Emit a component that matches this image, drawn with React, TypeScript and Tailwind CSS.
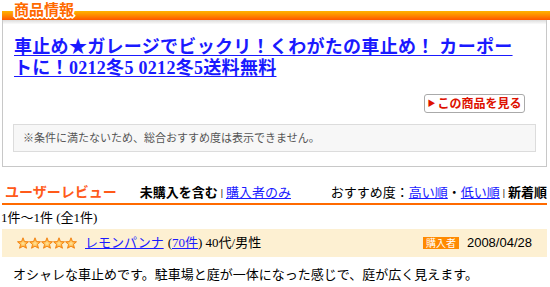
import React from "react";

const serif = "font-['Liberation_Serif','Noto_Sans_CJK_JP',serif]";
const sans = "font-['Liberation_Sans','Noto_Sans_CJK_JP',sans-serif]";

function Star() {
  return (
    <svg width="12" height="12" viewBox="0 0 24 23">
      <defs>
        <radialGradient id="sg" cx="50%" cy="55%" r="55%">
          <stop offset="0%" stopColor="#ffe9a0" />
          <stop offset="55%" stopColor="#ffb040" />
          <stop offset="100%" stopColor="#ff8a00" />
        </radialGradient>
      </defs>
      <polygon
        points="12,1 15,8.5 23,9 17,14.5 19,22 12,18 5,22 7,14.5 1,9 9,8.5"
        fill="url(#sg)"
        stroke="#f07800"
        strokeWidth="1.6"
        strokeLinejoin="round"
      />
    </svg>
  );
}

export default function App() {
  return (
    <div className={`w-[550px] h-[287px] bg-white overflow-hidden ${serif}`}>
      {/* header bar */}
      <div className="relative h-[20px]">
        <div className="absolute left-[2px] right-0 top-[11px] h-[9px] bg-gradient-to-b from-[#ffb400] to-[#ff5500]" />
        <span
          className={`absolute left-[14px] top-[1px] text-[15px] leading-[17px] font-bold text-[#ff6a00] ${sans} [text-shadow:1px_0_0_#fff,-1px_0_0_#fff,0_1px_0_#fff,0_-1px_0_#fff,1px_1px_0_#fff,-1px_-1px_0_#fff,1px_-1px_0_#fff,-1px_1px_0_#fff,2px_0_0_#fff,-2px_0_0_#fff,0_2px_0_#fff]`}
        >
          商品情報
        </span>
      </div>

      {/* product box */}
      <div className="ml-[2px] mr-[3px] h-[147px] border-x border-b border-[#c8c8c8] bg-gradient-to-b from-[#dcdcdc] via-white to-white bg-[length:100%_9px] bg-no-repeat flex flex-col">
        <a
          href="#"
          className="mt-[17px] ml-[11px] mr-[28px] text-[18px] leading-[21px] font-bold tracking-[0.3px] text-[#1a1aff] underline decoration-1 underline-offset-[2px]"
        >
          車止め★ガレージでビックリ！くわがたの車止め！ カーポートに！0212冬5 0212冬5送料無料
        </a>
        <div className="flex justify-end mt-[15px] mr-[21px]">
          <div
            className={`h-[19px] w-[101px] whitespace-nowrap flex items-center justify-center gap-[2px] border border-[#aaa] rounded-[3px] bg-white text-[#dd1100] text-[12px] font-bold ${sans}`}
          >
            <span className="text-[8px] leading-none">▶</span>
            <span className="leading-none">この商品を見る</span>
          </div>
        </div>
        <div className="mt-[11px] mx-[10px] h-[28px] flex items-center pl-[9px] bg-[#f7f7f7] border border-[#dcdcdc] text-[11px] text-[#555]">
          ※条件に満たないため、総合おすすめ度は表示できません。
        </div>
      </div>

      {/* review heading */}
      <div className="mt-[15px] ml-[2px] mr-[3px] h-[23px] border-b-[2px] border-[#ff6a00] flex items-center text-[13px] text-black">
        <span className={`ml-[3px] text-[14px] font-bold text-[#ff5a1a] ${sans}`}>ユーザーレビュー</span>
        <span className="ml-[23px] font-bold">未購入を含む</span>
        <span className="mx-[3px] font-bold text-[10px]">|</span>
        <a href="#" className="text-[#1a1aff] underline">購入者のみ</a>
        <span className="ml-auto">おすすめ度：</span>
        <a href="#" className="text-[#1a1aff] underline">高い順</a>
        <span>・</span>
        <a href="#" className="text-[#1a1aff] underline">低い順</a>
        <span className="mx-[3px] font-bold text-[10px]">|</span>
        <span className="font-bold">新着順</span>
      </div>

      <div className="mt-[4px] h-[17px] flex items-center text-[13px] text-black pl-[1px]">1件〜1件 (全1件)</div>

      {/* review row */}
      <div className="mt-[3px] ml-[2px] mr-[3px] h-[28px] bg-[#fdf0d2] flex items-center text-[13px] text-black">
        <div className="ml-[15px] flex gap-[0px]">
          <Star />
          <Star />
          <Star />
          <Star />
          <Star />
        </div>
        <a href="#" className="ml-[8px] text-[#1a1aff] underline">レモンパンナ</a>
        <span className="ml-[4px]">(</span>
        <a href="#" className="text-[#1a1aff] underline">70件</a>
        <span>) 40代/男性</span>
        <span className={`ml-auto h-[12px] px-[3px] flex items-center bg-[#ff8a00] text-white text-[10px] ${sans}`}>購入者</span>
        <span className={`ml-[8px] mr-[15px] ${sans}`}>2008/04/28</span>
      </div>

      <div className="mt-[9px] pl-[13px] text-[13px] leading-[18px] text-black">
        オシャレな車止めです。駐車場と庭が一体になった感じで、庭が広く見えます。
      </div>
    </div>
  );
}
